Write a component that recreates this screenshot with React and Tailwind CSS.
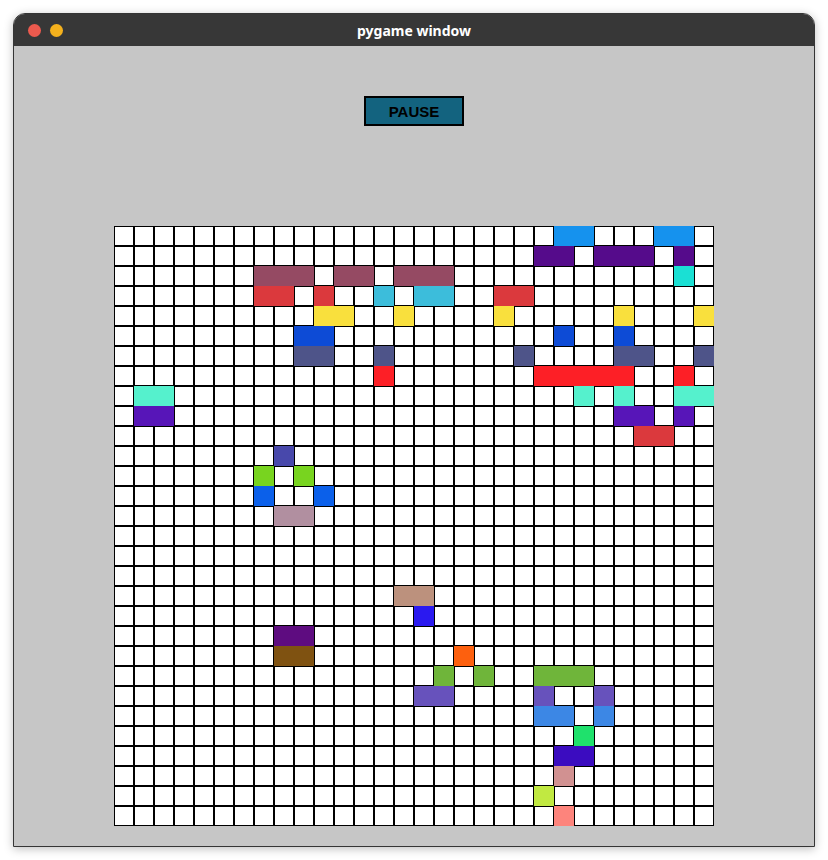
import React from "react";

// color letters used in the board rows
const COLORS = {
  a: "bg-[#1592ee]",
  b: "bg-[#550b8b]",
  c: "bg-[#954a63]",
  d: "bg-[#1ae0d4]",
  e: "bg-[#db393d]",
  f: "bg-[#3cbddb]",
  g: "bg-[#f9e03d]",
  h: "bg-[#0d4bd6]",
  i: "bg-[#4e5489]",
  j: "bg-[#fd1f26]",
  k: "bg-[#55f1cd]",
  l: "bg-[#5715b8]",
  m: "bg-[#4848ab]",
  n: "bg-[#78d41f]",
  o: "bg-[#0b60ea]",
  p: "bg-[#b18fa0]",
  q: "bg-[#bc917d]",
  r: "bg-[#2a19f0]",
  s: "bg-[#5e0c80]",
  t: "bg-[#7f5211]",
  u: "bg-[#fd600e]",
  v: "bg-[#6fb53a]",
  w: "bg-[#6752bc]",
  x: "bg-[#3c87e5]",
  y: "bg-[#1fe16c]",
  z: "bg-[#3b0cc0]",
  A: "bg-[#d19191]",
  B: "bg-[#c1e941]",
  C: "bg-[#fd847c]",
};

const WIDTHS = { 1: "w-5", 2: "w-10", 3: "w-15", 4: "w-20", 5: "w-25" };

const BOARD = [
  "......................aa...aa.",
  ".....................bb.bbb.b.",
  ".......ccc.cc.ccc...........d.",
  ".......ee.e..f.ff..ee.........",
  "..........gg..g....g.....g...g",
  ".........hh...........h..h....",
  ".........ii..i......i....ii..i",
  ".............j.......jjjjj..j.",
  ".kk....................k.k..kk",
  ".ll......................ll.l.",
  "..........................ee..",
  "........m.....................",
  ".......n.n....................",
  ".......o..o...................",
  "........pp....................",
  "..............................",
  "..............................",
  "..............................",
  "..............qq..............",
  "...............r..............",
  "........ss....................",
  "........tt.......u............",
  "................v.v..vvv......",
  "...............ww....w..w.....",
  ".....................xx.x.....",
  ".......................y......",
  "......................zz......",
  "......................A.......",
  ".....................B........",
  "......................C.......",
];

// split a row into runs: empty cells one by one, colored cells merged
function runs(row) {
  const out = [];
  let i = 0;
  while (i < row.length) {
    const ch = row[i];
    if (ch === ".") {
      out.push({ ch, n: 1 });
      i++;
      continue;
    }
    let j = i;
    while (j < row.length && row[j] === ch) j++;
    out.push({ ch, n: j - i });
    i = j;
  }
  return out;
}

function Board() {
  return (
    <div className="flex flex-col">
      {BOARD.map((row, r) => (
        <div key={r} className="flex h-5">
          {runs(row).map((run, k) =>
            run.ch === "." ? (
              <div key={k} className="w-5 h-5 border border-black bg-white" />
            ) : (
              <div key={k} className={`h-5 ${WIDTHS[run.n]} ${COLORS[run.ch]}`} />
            )
          )}
        </div>
      ))}
    </div>
  );
}

export default function App() {
  return (
    <div className="min-h-screen bg-white pt-[13px] pl-[13px]">
      <div className="w-[802px] rounded-t-[12px] overflow-hidden border border-[#353535] shadow-[0_2px_10px_rgba(0,0,0,0.25)]">
        <div className="relative h-[32px] bg-[#373737] flex items-center">
          <div className="flex items-center gap-[9px] pl-[14px]">
            <span className="w-[13px] h-[13px] rounded-full bg-[#ec5a4e]" />
            <span className="w-[13px] h-[13px] rounded-full bg-[#f4b11d]" />
          </div>
          <div className="absolute inset-0 flex items-center justify-center text-white font-bold text-[14px] font-['Noto_Sans',sans-serif]">
            pygame window
          </div>
        </div>
        <div className="w-[800px] h-[800px] bg-[#c6c6c6] flex flex-col items-center">
          <div className="mt-[50px] w-[100px] h-[30px] border-2 border-black bg-[#13637f] flex items-center justify-center text-black text-[15px] font-bold leading-none font-['Liberation_Sans',Arial,sans-serif]">
            PAUSE
          </div>
          <div className="mt-[100px]">
            <Board />
          </div>
        </div>
      </div>
    </div>
  );
}
